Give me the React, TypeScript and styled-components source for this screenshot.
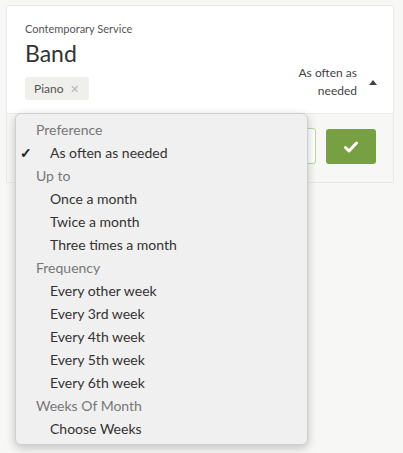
import styled, { createGlobalStyle } from "styled-components";

const GlobalStyle = createGlobalStyle`
  * { box-sizing: border-box; }
  body {
    margin: 0;
    background: #f7f7f6;
    font-family: Lato, "Open Sans", sans-serif;
    color: #333;
  }
`;

type Row = { label: string; header?: boolean; checked?: boolean };

const rows: Row[] = [
  { label: "Preference", header: true },
  { label: "As often as needed", checked: true },
  { label: "Up to", header: true },
  { label: "Once a month" },
  { label: "Twice a month" },
  { label: "Three times a month" },
  { label: "Frequency", header: true },
  { label: "Every other week" },
  { label: "Every 3rd week" },
  { label: "Every 4th week" },
  { label: "Every 5th week" },
  { label: "Every 6th week" },
  { label: "Weeks Of Month", header: true },
  { label: "Choose Weeks" },
];

const App = () => {
  return (
    <>
      <GlobalStyle />
      <Page>
        <Card>
          <Top>
            <Info>
              <Service>Contemporary Service</Service>
              <Title>Band</Title>
              <Chip>
                Piano <ChipClose>✕</ChipClose>
              </Chip>
            </Info>
            <Freq>
              <FreqText>
                As often as
                <br />
                needed
              </FreqText>
              <Caret />
            </Freq>
          </Top>
          <Footer>
            <Field />
            <SaveButton>
              <svg width="14" height="12" viewBox="0 0 14 12">
                <path
                  d="M1.5 6.5 L5 10 L12.5 2"
                  fill="none"
                  stroke="#fff"
                  strokeWidth="3"
                  strokeLinecap="round"
                  strokeLinejoin="round"
                />
              </svg>
            </SaveButton>
          </Footer>
          <Menu>
            {rows.map((row) =>
              row.header ? (
                <GroupLabel key={row.label}>{row.label}</GroupLabel>
              ) : (
                <Option key={row.label}>
                  {row.checked && <Check>✓</Check>}
                  {row.label}
                </Option>
              )
            )}
          </Menu>
        </Card>
      </Page>
    </>
  );
};

const Page = styled.div`
  width: 403px;
  height: 453px;
  padding: 5px 9px 0 6px;
`;

const Card = styled.div`
  position: relative;
  background: #fff;
  border: 1px solid #e9e9e7;
  border-radius: 2px;
`;

const Top = styled.div`
  display: flex;
  justify-content: space-between;
  align-items: flex-end;
  padding: 16px 16px 13px 18px;
  height: 108px;
  border-bottom: 1px solid #ececea;
`;

const Info = styled.div`
  display: flex;
  flex-direction: column;
  align-items: flex-start;
`;

const Service = styled.div`
  font-size: 11px;
  color: #555;
  line-height: 14px;
`;

const Title = styled.div`
  font-size: 23px;
  color: #333;
  line-height: 28px;
  margin-top: 3px;
`;

const Chip = styled.div`
  display: flex;
  align-items: center;
  gap: 6px;
  margin-top: 10px;
  height: 23px;
  padding: 0 9px 0 9px;
  width: 64px;
  background: #efefeb;
  border-radius: 3px;
  font-size: 12px;
  color: #555;
`;

const ChipClose = styled.span`
  font-size: 11px;
  color: #b5b5b5;
`;

const Freq = styled.div`
  display: flex;
  align-items: center;
  gap: 12px;
  margin-bottom: 0;
`;

const FreqText = styled.div`
  text-align: right;
  font-size: 12px;
  line-height: 18px;
  color: #444;
`;

const Caret = styled.span`
  width: 0;
  height: 0;
  border-left: 4.5px solid transparent;
  border-right: 4.5px solid transparent;
  border-bottom: 5px solid #444;
`;

const Footer = styled.div`
  display: flex;
  align-items: flex-start;
  justify-content: flex-end;
  gap: 10px;
  height: 68px;
  padding: 14px 17px 0;
  background: #f7f7f6;
`;

const Field = styled.div`
  width: 60px;
  height: 36px;
  border: 1px solid #b9dc92;
  border-radius: 3px;
  background: #fff;
`;

const SaveButton = styled.button`
  display: flex;
  align-items: center;
  justify-content: center;
  width: 50px;
  height: 35px;
  margin-top: 1px;
  border: none;
  border-radius: 3px;
  background: #76a042;
`;

const Menu = styled.div`
  position: absolute;
  left: 8px;
  top: 107px;
  width: 293px;
  padding: 4px 0 4px;
  background: #f0f0f0;
  border: 1px solid #cfcfcf;
  border-radius: 6px;
  box-shadow: 0 3px 10px rgba(0, 0, 0, 0.22);
`;

const GroupLabel = styled.div`
  height: 23px;
  line-height: 23px;
  padding-left: 20px;
  font-size: 14px;
  color: #777;
`;

const Option = styled.div`
  position: relative;
  height: 23px;
  line-height: 23px;
  padding-left: 34px;
  font-size: 14px;
  color: #333;
`;

const Check = styled.span`
  position: absolute;
  left: 4px;
  top: 0;
  font-size: 14px;
  font-weight: 700;
  color: #222;
`;

export default App;
